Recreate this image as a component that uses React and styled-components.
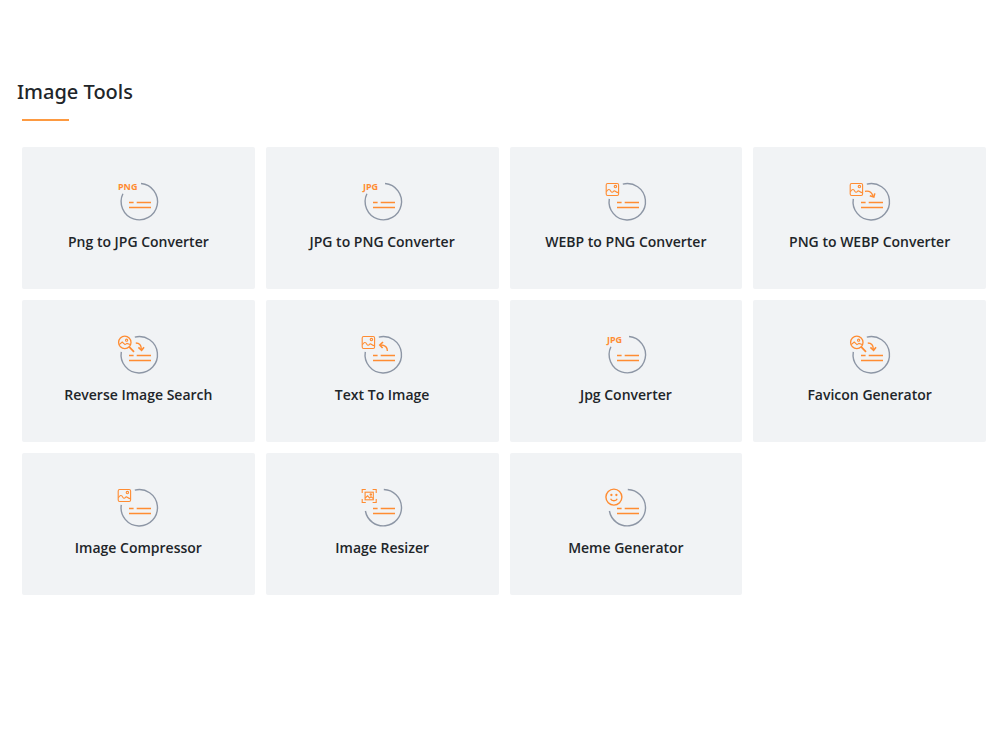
import React from 'react';
import styled, { createGlobalStyle } from 'styled-components';

const GlobalStyle = createGlobalStyle`
  * {
    box-sizing: border-box;
  }
  body {
    margin: 0;
    background: #fff;
    color: #212529;
    font-family: "Open Sans", "Noto Sans", sans-serif;
  }
`;

const Section = styled.section`
  padding: 76px 14px 40px 22px;
`;

const Title = styled.h2`
  margin: 0 0 0 -5px;
  font-family: "Noto Sans", "Open Sans", sans-serif;
  font-size: 20px;
  line-height: 32px;
  font-weight: 500;
`;

const Underline = styled.hr`
  width: 47px;
  height: 2px;
  margin: 11px 0 26px;
  border: none;
  background: #fd9a41;
`;

const Grid = styled.div`
  display: grid;
  grid-template-columns: repeat(4, 1fr);
  gap: 11px;
`;

const Card = styled.a`
  display: flex;
  flex-direction: column;
  align-items: center;
  height: 142px;
  padding-top: 34px;
  border-radius: 2px;
  background: #f1f3f5;
  color: #212529;
  text-decoration: none;
`;

const Label = styled.span`
  margin-top: 7px;
  font-size: 14px;
  line-height: 24px;
  font-weight: 600;
`;

const Icon = styled.svg`
  width: 42px;
  height: 42px;
  fill: none;
  stroke: #ff8c32;
  stroke-width: 1.1;
  overflow: visible;
`;

const Format = styled.text`
  font-family: "Noto Sans", "Open Sans", sans-serif;
  font-size: 9px;
  font-weight: 700;
  fill: #ff8c32;
  stroke: none;
`;

// the ring is open at the top left, where the badge of the tool sits
const rings = {
  text: 'M24 2.5A18.2 18.2 0 1 1 5.9 12.8',
  badge: 'M17.8 3.1A18.2 18.2 0 1 1 4.3 17.8',
  wide: 'M22.8 2.5A18.2 18.2 0 1 1 4.4 24',
};

function Picture() {
  return (
    <>
      <rect x="1.2" y="2.5" width="12.4" height="12" rx="1.4" />
      <circle cx="10.4" cy="5.6" r="1.2" />
      <path d="M1.4 10.8C3 8 4.6 7.8 5.8 10.2C6.6 11.6 7.6 11.6 8.6 10.2C9.8 8.8 10.8 11.4 13.4 11.6" />
    </>
  );
}

function Lens() {
  return (
    <>
      <circle cx="7.8" cy="8.4" r="6.2" strokeWidth="1.3" />
      <circle cx="9.6" cy="6.2" r="1.1" />
      <path d="M2.2 10.6L5.2 8L8 10.6L10 9.4L13.2 10.4" />
      <path d="M12.2 12.8L17 17.8" strokeWidth="1.7" />
      <path d="M18.8 9C22.2 9 24.2 11.4 24.3 15" strokeWidth="1.3" />
      <path d="M21.4 13.4L24.6 16.4L27 13.2" strokeWidth="1.6" />
    </>
  );
}

const badges = {
  png: <Format x="1" y="9">PNG</Format>,
  jpg: <Format x="2" y="9">JPG</Format>,
  picture: <Picture />,
  pictureOut: (
    <>
      <Picture />
      <path d="M16 10.4C20 9.6 22.8 11.6 24 15" strokeWidth="1.3" />
      <path d="M20.8 14.8L24.8 16L25.8 12.4" strokeWidth="1.6" />
    </>
  ),
  pictureIn: (
    <>
      <Picture />
      <path d="M26.4 17C26.4 13 24 11 19.4 11" strokeWidth="1.4" />
      <path d="M22 8L18.8 11L21.6 14" strokeWidth="1.6" />
    </>
  ),
  lens: <Lens />,
  resize: (
    <>
      <path d="M1.2 6V2.5H4.8M11.6 2.5H15.2V6M15.2 12V15.5H11.6M4.8 15.5H1.2V12" />
      <rect x="4.1" y="5.2" width="8.2" height="7.6" />
      <circle cx="9.8" cy="7.6" r="0.7" />
      <path d="M4.2 11L6.6 8.8L8.6 11L10 9.8L12.2 11.4" />
    </>
  ),
  smile: (
    <>
      <circle cx="8.9" cy="10.1" r="8" strokeWidth="1.4" />
      <path d="M5.6 11.8C6.6 14.4 11.2 14.4 12.2 11.8" strokeWidth="1.3" />
      <circle cx="6.4" cy="8" r="0.6" />
      <circle cx="11.4" cy="8" r="0.6" />
    </>
  ),
};

function ToolIcon({ badge, ring }) {
  return (
    <Icon viewBox="0 0 42 42" aria-hidden="true">
      <path d={rings[ring]} stroke="#8d96a5" strokeWidth="1.4" />
      <path d="M12 21.5H16.6M19.7 21.5H34M12 26.5H34" strokeWidth="1.3" />
      {badges[badge]}
    </Icon>
  );
}

const tools = [
  { name: 'Png to JPG Converter', badge: 'png', ring: 'text' },
  { name: 'JPG to PNG Converter', badge: 'jpg', ring: 'text' },
  { name: 'WEBP to PNG Converter', badge: 'picture', ring: 'badge' },
  { name: 'PNG to WEBP Converter', badge: 'pictureOut', ring: 'badge' },
  { name: 'Reverse Image Search', badge: 'lens', ring: 'badge' },
  { name: 'Text To Image', badge: 'pictureIn', ring: 'badge' },
  { name: 'Jpg Converter', badge: 'jpg', ring: 'text' },
  { name: 'Favicon Generator', badge: 'lens', ring: 'badge' },
  { name: 'Image Compressor', badge: 'picture', ring: 'badge' },
  { name: 'Image Resizer', badge: 'resize', ring: 'wide' },
  { name: 'Meme Generator', badge: 'smile', ring: 'wide' },
];

function App() {
  return (
    <>
      <GlobalStyle />
      <Section>
        <Title>Image Tools</Title>
        <Underline />
        <Grid>
          {tools.map((tool) => (
            <Card key={tool.name} href="#">
              <ToolIcon badge={tool.badge} ring={tool.ring} />
              <Label>{tool.name}</Label>
            </Card>
          ))}
        </Grid>
      </Section>
    </>
  );
}

export default App;
